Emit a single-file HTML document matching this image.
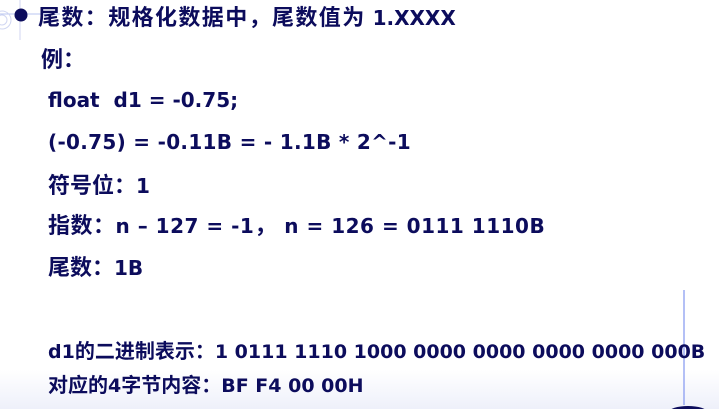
<!DOCTYPE html>
<html><head><meta charset="utf-8"><style>
body{margin:0;width:719px;height:409px;overflow:hidden;background:linear-gradient(#fff 0,#fff 370px,#eef0fa 409px);position:relative;font-family:"DejaVu Sans","Noto Sans CJK SC",sans-serif;font-weight:bold;color:#0c0c5c}
.t{position:absolute;white-space:nowrap;font-size:20px;line-height:24px}
.c{font-family:"Noto Sans CJK SC",sans-serif;font-size:22px}
.s{font-size:19px}
.s .c{font-size:20px}
</style></head><body>
<svg style="position:absolute;left:0;top:0" width="719" height="409">
<line x1="0" y1="14" x2="60" y2="14" stroke="#b8c4f0" stroke-width="1"/>
<circle cx="2" cy="20" r="9" fill="none" stroke="#d0d6f2"/>
<circle cx="2" cy="20" r="5" fill="none" stroke="#d0d6f2"/>
<line x1="20" y1="0" x2="20" y2="40" stroke="#d0d6f2"/>
<circle cx="21" cy="15" r="6.5" fill="#0c0c5c"/>
<line x1="684" y1="290" x2="684" y2="405" stroke="#6a82ee" stroke-width="1"/>
<ellipse cx="688" cy="412" rx="19" ry="6" fill="#0c0c5c"/>
</svg>
<div class="t" style="left:38px;top:4px"><span class="c" style="letter-spacing:1.4px">尾数：规格化数据中，尾数值为</span> 1.XXXX</div>
<div class="t" style="left:41px;top:46px"><span class="c">例：</span></div>
<div class="t" style="left:48px;top:88px">float&nbsp; d1 = -0.75;</div>
<div class="t" style="left:48px;top:130px;letter-spacing:0.3px">(-0.75) = -0.11B = - 1.1B * 2^-1</div>
<div class="t" style="left:48px;top:172px"><span class="c">符号位：</span>1</div>
<div class="t" style="left:48px;top:212px;letter-spacing:0.5px"><span class="c">指数：</span>n – 127 = -1<span class="c">，</span> n = 126 = 0111 1110B</div>
<div class="t" style="left:48px;top:254px"><span class="c">尾数：</span>1B</div>
<div class="t s" style="left:48px;top:338px">d1<span class="c">的二进制表示：</span>1 0111 1110 1000 0000 0000 0000 0000 000B</div>
<div class="t s" style="left:48px;top:372px"><span class="c">对应的</span>4<span class="c">字节内容：</span>BF F4 00 00H</div>
</body></html>
